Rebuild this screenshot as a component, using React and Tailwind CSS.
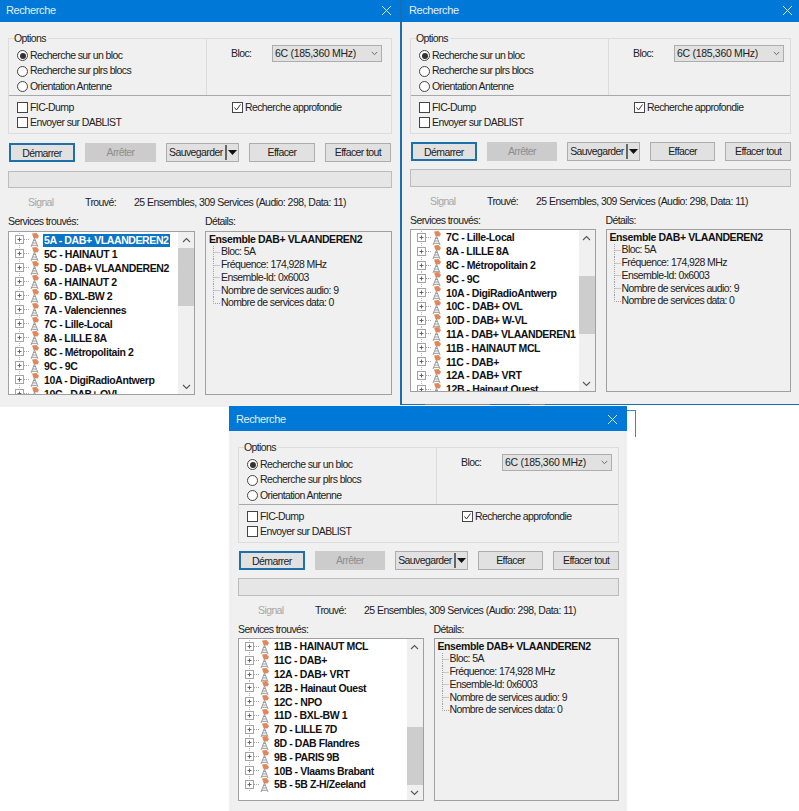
const Tower = () => (
  <svg width="11" height="14" viewBox="0 0 11 14" className="shrink-0">
    <path d="M3 0.5 L7.5 0 L10 3 L8.5 5.5 L4.5 5 Z" fill="#e2875a" />
    <path d="M5.5 5 L2 14 M5.5 5 L9 14 M3.8 10 L7.2 10 M3 12.3 L8 12.3 M4.6 7.5 L6.4 7.5" stroke="#9a9a9a" strokeWidth="1" fill="none" />
  </svg>
);

const Expander = () => (
  <svg width="21" height="14" viewBox="0 0 21 14" className="shrink-0">
    <path d="M4.5 0 V14" stroke="#b4b4b4" strokeDasharray="1 1" />
    <rect x="0.5" y="2.5" width="8" height="8" fill="#fff" stroke="#a4a4a4" />
    <path d="M2.5 6.5 H6.5 M4.5 4.5 V8.5" stroke="#666" />
    <path d="M9 6.5 H14" stroke="#a4a4a4" strokeDasharray="1 1" />
  </svg>
);

const Chevron = ({ up, small }) => (
  <svg width={small ? 7 : 9} height={small ? 5 : 6} viewBox="0 0 9 6">
    <path d={up ? "M1 5 L4.5 1.5 L8 5" : "M1 1 L4.5 4.5 L8 1"} stroke="#555" strokeWidth="1.1" fill="none" />
  </svg>
);

const Radio = ({ on, label }) => (
  <div className="flex items-center h-[15.5px]">
    <span className="w-[11px] h-[11px] rounded-full border border-[#444] bg-white flex items-center justify-center shrink-0">
      {on && <span className="w-[6px] h-[6px] rounded-full bg-[#333]" />}
    </span>
    <span className="ml-[2px]">{label}</span>
  </div>
);

const Check = ({ on, label }) => (
  <div className="flex items-center h-[15px]">
    <span className="w-[11px] h-[11px] border border-[#444] bg-white flex items-center justify-center shrink-0">
      {on && (
        <svg width="9" height="9" viewBox="0 0 9 9">
          <path d="M1.5 4.5 L3.5 7 L7.5 1.5" stroke="#333" strokeWidth="1" fill="none" />
        </svg>
      )}
    </span>
    <span className="ml-[2px]">{label}</span>
  </div>
);

const details = ["Bloc: 5A", "Fréquence: 174,928 MHz", "Ensemble-Id: 0x6003", "Nombre de services audio: 9", "Nombre de services data: 0"];

const Win = ({ place, body, rows, selected, thumb, compact }) => (
  <section className={`absolute flex flex-col bg-[#f0f0f0] ${place}`}>
    <header className="h-[25px] shrink-0 bg-[#0078d7] flex items-center justify-between pl-[7px] pr-[9px] pt-[2px] text-[#e4f0fa] text-[11px] tracking-[-0.4px]">
      <span>Recherche</span>
      <svg width="11" height="11" viewBox="0 0 11 11"><path d="M1 1 L10 10 M10 1 L1 10" stroke="#d6e8f6" strokeWidth="1" /></svg>
    </header>
    <div className={`flex flex-col pt-[16px] ${body}`}>
      <div className="relative h-[96px] border border-[#dcdcdc]">
        <span className="absolute left-[5px] -top-[7px] bg-[#f0f0f0] pr-[2px] leading-[12px]">Options</span>
        <div className="grid grid-cols-[198px_1fr] h-[57px] border-b border-[#a8a8a8]">
          <div className="border-r border-[#dcdcdc] pl-[8px] pt-[9px]">
            <Radio on label="Recherche sur un bloc" />
            <Radio label="Recherche sur plrs blocs" />
            <Radio label="Orientation Antenne" />
          </div>
          <div className="flex items-start pl-[24px] pt-[6px]">
            <span className="w-[41px] leading-[16px]">Bloc:</span>
            <div className="w-[110px] h-[17px] bg-[#e1e1e1] border border-[#adadad] flex items-center justify-between pl-[2px] pr-[3px] tracking-[-0.3px]">
              <span>6C (185,360 MHz)</span>
              <Chevron small />
            </div>
          </div>
        </div>
        <div className="grid grid-cols-[215px_1fr] pl-[8px] pt-[4px]">
          <div>
            <Check label="FIC-Dump" />
            <Check label="Envoyer sur DABLIST" />
          </div>
          <Check on label="Recherche approfondie" />
        </div>
      </div>

      <div className={`flex gap-[10px] ml-px h-[19px] text-center leading-[17px] ${compact ? "mt-[8px]" : "mt-[9px]"}`}>
        <button className="w-[66px] bg-[#e1e1e1] border-2 border-[#1f6fa8]">Démarrer</button>
        <button className="w-[71px] bg-[#cccccc] text-[#8e8e8e]">Arrêter</button>
        <button className="w-[73px] bg-[#e1e1e1] border border-[#adadad] flex items-center justify-between pl-[2px] pr-px">
          <span>Sauvegarder</span>
          <span className="flex items-center h-[15px] border-l-2 border-[#666] pl-[1px]">
            <svg width="9" height="5" viewBox="0 0 9 5"><path d="M0 0 H9 L4.5 5 Z" fill="#111" /></svg>
          </span>
        </button>
        <button className="w-[66px] bg-[#e1e1e1] border border-[#adadad]">Effacer</button>
        <button className="w-[66px] bg-[#e1e1e1] border border-[#adadad]">Effacer tout</button>
      </div>

      <div className={`bg-[#e6e6e6] border border-[#bcbcbc] ${compact ? "mt-[8px] h-[18px]" : "mt-[9px] h-[17px]"}`} />

      <div className="flex mt-[7px] h-[14px] leading-[14px]">
        <span className="w-[77px] pl-[20px] text-[#a6a6a6]">Signal</span>
        <span className="w-[49px]">Trouvé:</span>
        <span className="tracking-[-0.53px]">25 Ensembles, 309 Services (Audio: 298, Data: 11)</span>
      </div>

      <div className="grid grid-cols-2 gap-x-[10px] mt-[5px]">
        <span className="h-[14px] leading-[14px]">Services trouvés:</span>
        <span className="h-[14px] leading-[14px]">Détails:</span>
        <div className={`border border-[#a0a0a0] bg-white flex overflow-hidden ${compact ? "mt-[2px] h-[163px]" : "mt-[3px] h-[164px]"}`}>
          <div className="flex-1 overflow-hidden pl-[6px] pt-px font-bold text-[#111] tracking-[-0.4px]">
            {rows.map((r) => (
              <div key={r} className={`flex items-center whitespace-nowrap ${compact ? "h-[13.8px]" : "h-[14px]"}`}>
                <Expander />
                <span className="-ml-[7px]"><Tower /></span>
                <span className={`ml-[3px] px-px leading-[13px] ${r === selected ? "bg-[#0a74c8] text-white" : ""}`}>{r}</span>
              </div>
            ))}
          </div>
          <div className="w-[16px] shrink-0 bg-[#f0f0f0] flex flex-col items-center">
            <div className="h-[15px] shrink-0 flex items-center"><Chevron up /></div>
            <div className="flex-1 w-full">
              <div className={`w-full h-[58px] bg-[#cdcdcd] ${thumb}`} />
            </div>
            <div className="h-[15px] shrink-0 flex items-center"><Chevron /></div>
          </div>
        </div>
        <div className={`border border-[#a0a0a0] pl-[3px] pt-px ${compact ? "mt-[2px] h-[163px]" : "mt-[3px] h-[164px]"}`}>
          <div className="font-bold text-[#111] tracking-[-0.4px] h-[13px] leading-[13px] whitespace-nowrap">Ensemble DAB+ VLAANDEREN2</div>
          {details.map((d, i) => (
            <div key={d} className="flex items-center h-[12.7px] ml-[3px] whitespace-nowrap">
              <svg width="9" height="13" viewBox="0 0 9 13" className="shrink-0">
                <path d={i === 4 ? "M1.5 0 V6.5 H8" : "M1.5 0 V13 M1.5 6.5 H8"} stroke="#a0a0a0" strokeDasharray="1 1" fill="none" />
              </svg>
              <span>{d}</span>
            </div>
          ))}
        </div>
      </div>
    </div>
  </section>
);

const all = ["5A - DAB+ VLAANDEREN2","5C - HAINAUT 1","5D - DAB+ VLAANDEREN2","6A - HAINAUT 2","6D - BXL-BW 2","7A - Valenciennes","7C - Lille-Local","8A - LILLE 8A","8C - Métropolitain 2","9C - 9C","10A - DigiRadioAntwerp","10C - DAB+ OVL"];
const mid = ["7C - Lille-Local","8A - LILLE 8A","8C - Métropolitain 2","9C - 9C","10A - DigiRadioAntwerp","10C - DAB+ OVL","10D - DAB+ W-VL","11A - DAB+ VLAANDEREN1","11B - HAINAUT MCL","11C - DAB+","12A - DAB+ VRT","12B - Hainaut Ouest"];
const last = ["11B - HAINAUT MCL","11C - DAB+","12A - DAB+ VRT","12B - Hainaut Ouest","12C - NPO","11D - BXL-BW 1","7D - LILLE 7D","8D - DAB Flandres","9B - PARIS 9B","10B - Vlaams Brabant","5B - 5B Z-H/Zeeland"];

export default function App() {
  return (
    <div className="relative w-[799px] h-[811px] overflow-hidden bg-white text-[10.5px] tracking-[-0.6px] text-[#222] font-['Liberation_Sans',sans-serif]">
      <Win place="-left-px -top-[3px] w-[402px] h-[410px]" body="pl-[9px] w-[393px]" rows={all} selected={all[0]} thumb="mt-px" />
      <Win place="left-[400px] -top-[3px] w-[402px] h-[408px] border-l-2 border-b border-[#1a6db0]" body="pl-[8px] w-[389px]" rows={mid} thumb="mt-[31px]" compact />
      <span className="absolute left-[425px] top-[404px] w-[65px] h-px bg-[#7d8a96]" />
      <span className="absolute left-[530px] top-[404px] w-[15px] h-px bg-[#7d8a96]" />
      <span className="absolute left-[620px] top-[410px] w-[16px] h-[27px] border-t border-r border-[#3b86c0]" />
      <Win place="left-[229px] top-[406px] w-[398px] h-[410px]" body="pl-[9px] w-[390px]" rows={last} thumb="mt-[73px]" compact />
    </div>
  );
}
